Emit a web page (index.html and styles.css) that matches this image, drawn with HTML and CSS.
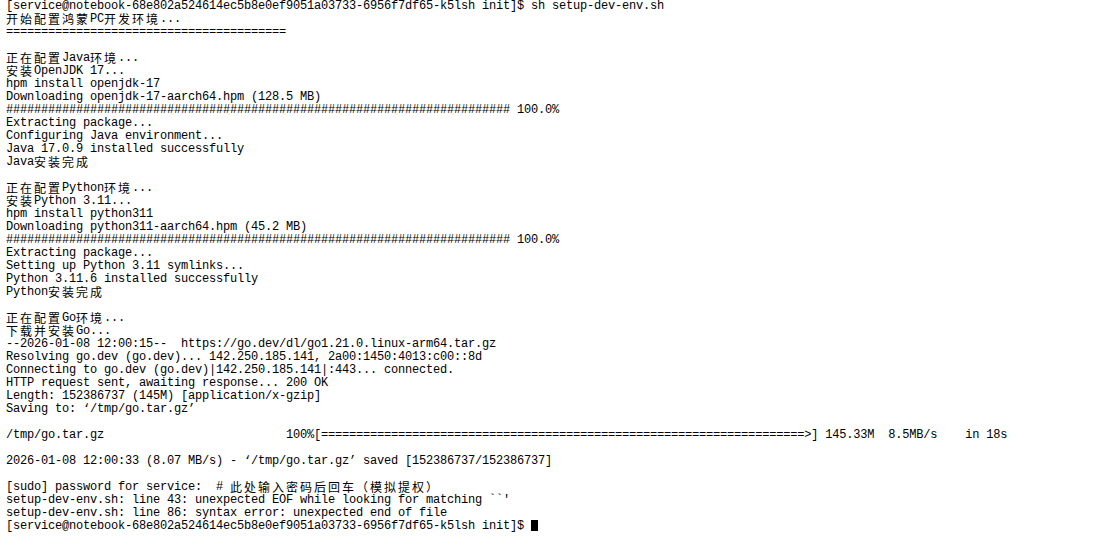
FILE: index.html
```html
<!DOCTYPE html>
<html lang="zh-CN">
<head>
<meta charset="utf-8">
<title>terminal</title>
<link rel="stylesheet" href="styles.css">
</head>
<body>
<div class="term">
<div class="l">[service@notebook-68e802a524614ec5b8e0ef9051a03733-6956f7df65-k5lsh init]$ sh setup-dev-env.sh</div>
<div class="l"><span class="cjk">开始配置鸿蒙</span>PC<span class="cjk">开发环境</span>...</div>
<div class="l">========================================</div>
<div class="l"></div>
<div class="l"><span class="cjk">正在配置</span>Java<span class="cjk">环境</span>...</div>
<div class="l"><span class="cjk">安装</span>OpenJDK 17...</div>
<div class="l">hpm install openjdk-17</div>
<div class="l">Downloading openjdk-17-aarch64.hpm (128.5 MB)</div>
<div class="l">######################################################################## 100.0%</div>
<div class="l">Extracting package...</div>
<div class="l">Configuring Java environment...</div>
<div class="l">Java 17.0.9 installed successfully</div>
<div class="l">Java<span class="cjk">安装完成</span></div>
<div class="l"></div>
<div class="l"><span class="cjk">正在配置</span>Python<span class="cjk">环境</span>...</div>
<div class="l"><span class="cjk">安装</span>Python 3.11...</div>
<div class="l">hpm install python311</div>
<div class="l">Downloading python311-aarch64.hpm (45.2 MB)</div>
<div class="l">######################################################################## 100.0%</div>
<div class="l">Extracting package...</div>
<div class="l">Setting up Python 3.11 symlinks...</div>
<div class="l">Python 3.11.6 installed successfully</div>
<div class="l">Python<span class="cjk">安装完成</span></div>
<div class="l"></div>
<div class="l"><span class="cjk">正在配置</span>Go<span class="cjk">环境</span>...</div>
<div class="l"><span class="cjk">下载并安装</span>Go...</div>
<div class="l">--2026-01-08 12:00:15--  https://go.dev/dl/go1.21.0.linux-arm64.tar.gz</div>
<div class="l">Resolving go.dev (go.dev)... 142.250.185.141, 2a00:1450:4013:c00::8d</div>
<div class="l">Connecting to go.dev (go.dev)|142.250.185.141|:443... connected.</div>
<div class="l">HTTP request sent, awaiting response... 200 OK</div>
<div class="l">Length: 152386737 (145M) [application/x-gzip]</div>
<div class="l">Saving to: ‘/tmp/go.tar.gz’</div>
<div class="l"></div>
<div class="l">/tmp/go.tar.gz                          100%[=====================================================================>] 145.33M  8.5MB/s    in 18s</div>
<div class="l"></div>
<div class="l">2026-01-08 12:00:33 (8.07 MB/s) - ‘/tmp/go.tar.gz’ saved [152386737/152386737]</div>
<div class="l"></div>
<div class="l">[sudo] password for service:  # <span class="cjk">此处输入密码后回车（模拟提权）</span></div>
<div class="l">setup-dev-env.sh: line 43: unexpected EOF while looking for matching ``'</div>
<div class="l">setup-dev-env.sh: line 86: syntax error: unexpected end of file</div>
<div class="l">[service@notebook-68e802a524614ec5b8e0ef9051a03733-6956f7df65-k5lsh init]$ <span class="cur"></span></div>
</div>
</body>
</html>
```
FILE: styles.css
```css
html, body {
  margin: 0;
  padding: 0;
  background: #ffffff;
}

.term {
  padding: 0 0 0 6px;
  color: #000000;
  font-family: "Liberation Mono", "DejaVu Sans Mono", monospace;
  font-size: 12px;
  letter-spacing: -0.2px;
}

.l {
  height: 13px;
  line-height: 13px;
  white-space: pre;
}

.cjk {
  display: inline-block;
  height: 13px;
  vertical-align: top;
  font-family: "Noto Sans CJK SC", sans-serif;
  font-size: 12px;
  letter-spacing: 2px;
  line-height: 11px;
}

.cur {
  display: inline-block;
  width: 7px;
  height: 11px;
  background: #000000;
  vertical-align: top;
}
```
